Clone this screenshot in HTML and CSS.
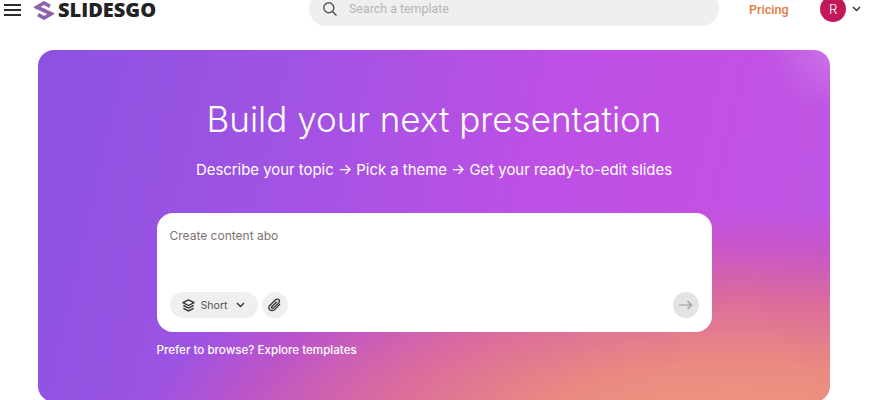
FILE: index.html
```html
<!DOCTYPE html>
<html lang="en">
<head>
<meta charset="utf-8">
<title>Slidesgo</title>
<link rel="stylesheet" href="styles.css">
</head>
<body>
<header class="topbar">
  <div class="brand">
    <svg class="menu-icon" width="17" height="12" viewBox="0 0 17 12"><path d="M0 1h17M0 6h17M0 11h17" stroke="#2b2b2b" stroke-width="2" fill="none"/></svg>
    <svg class="logo-mark" width="20" height="19" viewBox="0 0 20 19"><path d="M16 5.4 10 2 2.8 6.2 10 9.5 17.2 12.8 10 17 4 13.6" fill="none" stroke="#8e62ad" stroke-width="3.6" stroke-linejoin="miter"/></svg>
    <span class="logo-text">SLIDESGO</span>
  </div>
  <div class="search">
    <svg width="16" height="16" viewBox="0 0 16 16"><circle cx="6.8" cy="6.8" r="5" stroke="#555" stroke-width="1.4" fill="none"/><path d="M10.5 10.5 14.5 14.5" stroke="#555" stroke-width="1.6"/></svg>
    <span>Search a template</span>
  </div>
  <div class="account">
    <span class="pricing">Pricing</span>
    <span class="avatar">R</span>
    <svg width="9" height="6" viewBox="0 0 9 6"><path d="M1 1 4.5 4.5 8 1" stroke="#333" stroke-width="1.5" fill="none"/></svg>
  </div>
</header>
<main class="hero">
  <h1>Build your next presentation</h1>
  <p class="sub">Describe your topic → Pick a theme → Get your ready-to-edit slides</p>
  <section class="composer">
    <div class="prompt">Create content abo</div>
    <div class="controls">
      <button class="pill"><svg width="13" height="13" viewBox="0 0 14 14"><path d="M7 1 13 4 7 7 1 4Z" fill="none" stroke="#333" stroke-width="1.5" stroke-linejoin="round"/><path d="M1.5 7 7 9.7 12.5 7M1.5 10 7 12.8 12.5 10" fill="none" stroke="#333" stroke-width="1.5"/></svg><span class="pill-label">Short</span><svg width="9" height="6" viewBox="0 0 9 6"><path d="M1 1 4.5 4.5 8 1" stroke="#333" stroke-width="1.4" fill="none"/></svg></button>
      <button class="round"><svg width="14" height="14" viewBox="0 0 14 14"><path d="M12 6 6.6 11.6C5 13.2 2.6 12.9 1.6 11.6.6 10.3.8 8.5 2 7.3L7.6 1.8C8.6.8 10.1.9 10.9 1.8 11.7 2.7 11.6 4 10.7 4.9L5.4 10.1C4.9 10.6 4.2 10.6 3.8 10.1 3.4 9.7 3.5 9 4 8.5L8.9 3.7" fill="none" stroke="#333" stroke-width="1.3"/></svg></button>
      <button class="round send"><svg width="15" height="10" viewBox="0 0 15 10"><path d="M1 5H13.5M9.5 1 13.5 5 9.5 9" fill="none" stroke="#9a9a9a" stroke-width="1.2"/></svg></button>
    </div>
  </section>
  <p class="browse">Prefer to browse? Explore templates</p>
</main>
</body>
</html>
```
FILE: styles.css
```css
* { box-sizing: border-box; }
html, body { margin: 0; height: 400px; overflow: hidden; background: #fff; }
body { font-family: Inter, "Liberation Sans", sans-serif; }
.topbar { height: 50px; position: relative; display: flex; }
.brand { display: flex; align-items: center; height: 20px; margin-left: 4px; }
.menu-icon { margin-right: 13px; }
.logo-mark { margin-right: 4px; }
.logo-text { font-family: "Open Sans", "Liberation Sans", sans-serif; font-weight: 800; font-size: 20px; line-height: 20px; color: #222; }
.search { position: absolute; left: 309px; top: -9px; width: 410px; height: 35px; border-radius: 18px; background: #efefef; display: flex; align-items: center; gap: 11px; padding: 0 13px; font-family: Roboto, sans-serif; font-size: 12.4px; color: #b5b5b5; }
.account { position: absolute; left: 749px; top: -4px; height: 26px; display: flex; align-items: center; }
.pricing { font-family: Roboto, sans-serif; font-weight: 500; font-size: 12.6px; color: #e5793f; width: 71px; }
.avatar { width: 26px; height: 26px; border-radius: 50%; background: #c2185b; color: #fff; font-size: 13px; font-weight: 300; display: flex; align-items: center; justify-content: center; margin-right: 6px; }
.hero { margin-left: 38px; width: 792px; height: 352px; border-radius: 16px; padding-top: 47px; display: flex; flex-direction: column; align-items: center; color: #fff; background: radial-gradient(circle at 100% 0, rgba(214,140,235,.5) 0, rgba(214,140,235,0) 60px), radial-gradient(ellipse 600px 235px at 88% 112%, #f09c82 0, #ea8a80 35%, rgba(222,110,150,.9) 62%, rgba(205,85,180,.55) 85%, rgba(192,79,228,0) 100%), linear-gradient(103deg, #8c52e0 0%, #a053e4 30%, #bc50e5 58%, #c250e4 78%, #bd58e3 100%); }
h1 { margin: 0; font-size: 35px; font-weight: 350; line-height: 44px; }
.sub { margin: 18px 0 0; font-size: 14.9px; font-weight: 400; line-height: 22px; }
.composer { margin-top: 32px; width: 555px; height: 119px; background: #fff; border-radius: 16px; padding: 15px 13px 14px; display: flex; flex-direction: column; justify-content: space-between; }
.prompt { font-size: 12px; line-height: 16px; color: #7b7270; }
.controls { display: flex; align-items: center; gap: 4px; }
button { border: 0; padding: 0; background: #efefef; display: flex; align-items: center; justify-content: center; font-family: inherit; }
.pill { width: 88px; height: 26px; border-radius: 13px; font-size: 10.6px; color: #555; gap: 6px; }
.pill-label { margin: 0 2px 0 -1px; }
.round { width: 26px; height: 26px; border-radius: 50%; }
.send { margin-left: auto; background: #e4e4e4; }
.browse { margin: 10px 0 0; width: 555px; font-size: 11.6px; font-weight: 500; line-height: 16px; }
```
